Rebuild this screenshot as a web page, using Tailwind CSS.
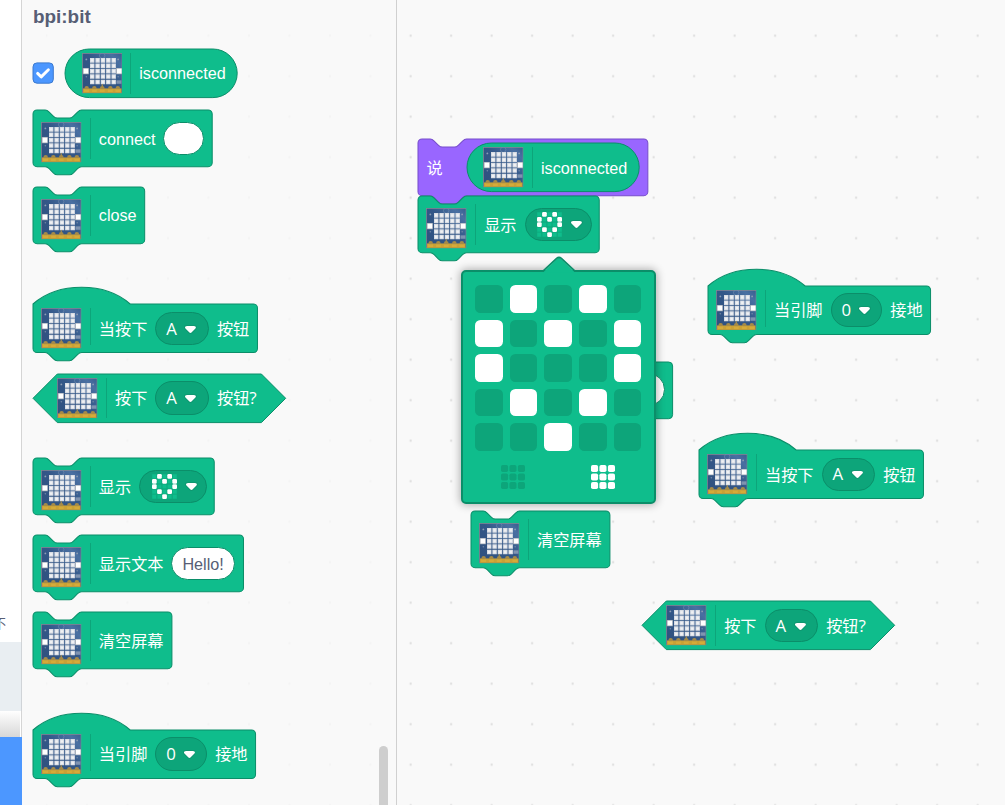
<!DOCTYPE html>
<html lang="zh-CN">
<head>
<meta charset="utf-8">
<title>bpi:bit</title>
<script src="https://cdn.jsdelivr.net/npm/@tailwindcss/browser@4"></script>
</head>
<body class="w-[1005px] h-[805px] overflow-hidden bg-[#f9f9f9] font-['Liberation_Sans','Noto_Sans_CJK_SC',sans-serif] text-[16.2px] leading-[20px] text-white">

<!-- shared symbols -->
<svg class="absolute w-0 h-0" aria-hidden="true">
  <defs>
    <linearGradient id="pcb" x1="0" y1="1" x2="1" y2="0"><stop offset="0" stop-color="#2f507e"/><stop offset=".55" stop-color="#335788"/><stop offset=".85" stop-color="#4a70a2"/><stop offset="1" stop-color="#3a5f90"/></linearGradient>
    <pattern id="dots" x="-9" y="15.5" width="40.5" height="40.5" patternUnits="userSpaceOnUse"><rect x="21.6" y="19.2" width="2" height="2" fill="#dcdcdc"/></pattern>
    <pattern id="dotsFaint" x="-16.5" y="15.5" width="40.5" height="40.5" patternUnits="userSpaceOnUse"><rect x="0" y="19.2" width="2" height="2" fill="#f3f3f3"/></pattern>
    <symbol id="board" viewBox="0 0 40 40">
      <rect width="40" height="40" fill="#7f8793"/>
      <rect x=".8" y=".8" width="38.4" height="38.4" fill="url(#pcb)"/>
      <circle cx="20" cy="2.6" r="2.7" fill="none" stroke="#6d89ad" stroke-width=".7"/>
      <g stroke="#d9dde4" stroke-width="4.5" stroke-dasharray="4.4 .9">
        <path d="M7.9 7.3h26.2"/><path d="M7.9 12.6h26.2"/><path d="M7.9 17.9h26.2"/><path d="M7.9 23.3h26.2"/><path d="M7.9 28.6h26.2"/>
      </g>
      <g stroke="#eff1f4" stroke-width="2.4" stroke-dasharray="2.4 2.9">
        <path d="M8.9 7.3h25"/><path d="M8.9 12.6h25"/><path d="M8.9 17.9h25"/><path d="M8.9 23.3h25"/><path d="M8.9 28.6h25"/>
      </g>
      <circle cx="4.3" cy="6.3" r=".9" fill="#8d9db3"/><circle cx="35.7" cy="6.3" r=".9" fill="#8d9db3"/>
      <circle cx="4.3" cy="23.4" r=".8" fill="#7388a5"/><circle cx="35.7" cy="23.4" r=".8" fill="#7388a5"/>
      <rect x=".8" y="14.8" width="6" height="6.2" fill="#9aa3b0"/><rect x="1.5" y="15.4" width="4.7" height="4.9" fill="#fff"/>
      <rect x="33.6" y="14.8" width="5.8" height="6.2" fill="#9aa3b0"/><rect x="34.4" y="15.4" width="4.7" height="4.9" fill="#fff"/>
      <rect x="34" y="27" width="5" height="3.4" fill="#7f93b0"/>
      <rect x="19.4" y="30.8" width="1.2" height="4" fill="#a98f4e"/>
      <rect x="1" y="35" width="38" height="4.4" fill="#c9a136"/>
      <g fill="#a68b47"><circle cx="4.6" cy="34.8" r="2.2"/><circle cx="12.2" cy="34.8" r="2.2"/><circle cx="20" cy="34.8" r="2.3"/><circle cx="28" cy="34.8" r="2.2"/><circle cx="35.4" cy="34.8" r="2.2"/></g>
      <g fill="#d5ab39"><rect x="2" y="35.8" width="5" height="2.8"/><rect x="10" y="35.8" width="4.6" height="2.8"/><rect x="17.6" y="35.8" width="4.8" height="2.8"/><rect x="25.6" y="35.8" width="4.8" height="2.8"/><rect x="33" y="35.8" width="5" height="2.8"/></g>
    </symbol>
    <symbol id="arrow" viewBox="0 0 12.71 8.79">
      <path fill="#231f20" opacity=".1" d="M12.71,2.44A2.41,2.41,0,0,1,12,4.16L8.08,8.08a2.45,2.45,0,0,1-3.45,0L0.72,4.16A2.42,2.42,0,0,1,0,2.44,2.48,2.48,0,0,1,.71.71C1,0.47,1.43,0,6.36,0S11.75,0.46,12,.71A2.44,2.44,0,0,1,12.71,2.44Z"/>
      <path fill="#fff" d="M6.36,7.79a1.43,1.43,0,0,1-1-.42L1.42,3.45a1.44,1.44,0,0,1,0-2c0.56-.56,9.31-0.56,9.87,0a1.44,1.44,0,0,1,0,2L7.37,7.37A1.43,1.43,0,0,1,6.36,7.79Z"/>
    </symbol>
    <symbol id="heart" viewBox="0 0 25 25">
      <g fill="#0fbd8c"><path d="M.2 .2h4.2v4.2H.2zM10.4 .2h4.2v4.2h-4.2zM20.6 .2h4.2v4.2h-4.2zM5.3 5.3h4.2v4.2H5.3zM15.5 5.3h4.2v4.2h-4.2zM5.3 10.4h4.2v4.2H5.3zM10.4 10.4h4.2v4.2h-4.2zM15.5 10.4h4.2v4.2h-4.2zM.2 15.5h4.2v4.2H.2zM10.4 15.5h4.2v4.2h-4.2zM20.6 15.5h4.2v4.2h-4.2zM.2 20.6h4.2v4.2H.2zM5.3 20.6h4.2v4.2H5.3zM15.5 20.6h4.2v4.2h-4.2zM20.6 20.6h4.2v4.2h-4.2z"/></g>
      <g fill="#fff"><rect x="5.1" y="0" width="4.7" height="4.7" rx="1.2"/><rect x="15.3" y="0" width="4.7" height="4.7" rx="1.2"/><rect x="0" y="5.1" width="4.7" height="4.7" rx="1.2"/><rect x="10.2" y="5.1" width="4.7" height="4.7" rx="1.2"/><rect x="20.3" y="5.1" width="4.7" height="4.7" rx="1.2"/><rect x="0" y="10.2" width="4.7" height="4.7" rx="1.2"/><rect x="20.3" y="10.2" width="4.7" height="4.7" rx="1.2"/><rect x="5.1" y="15.3" width="4.7" height="4.7" rx="1.2"/><rect x="15.3" y="15.3" width="4.7" height="4.7" rx="1.2"/><rect x="10.2" y="20.3" width="4.7" height="4.7" rx="1.2"/></g>
    </symbol>
    <symbol id="nine" viewBox="0 0 24 24">
      <rect width="7.1" height="7.1" rx="1.8"/><rect x="8.4" width="7.1" height="7.1" rx="1.8"/><rect x="16.9" width="7.1" height="7.1" rx="1.8"/>
      <rect y="8.4" width="7.1" height="7.1" rx="1.8"/><rect x="8.4" y="8.4" width="7.1" height="7.1" rx="1.8"/><rect x="16.9" y="8.4" width="7.1" height="7.1" rx="1.8"/>
      <rect y="16.9" width="7.1" height="7.1" rx="1.8"/><rect x="8.4" y="16.9" width="7.1" height="7.1" rx="1.8"/><rect x="16.9" y="16.9" width="7.1" height="7.1" rx="1.8"/>
    </symbol>
  </defs>
</svg>

<div class="flex w-full h-full">

  <!-- category strip -->
  <aside class="flex flex-col shrink-0 w-[22px] h-full overflow-hidden bg-white text-[#575e75]">
    <div class="h-[642px] flex items-end border-r border-[#d5d5d5]"><span class="-ml-[7px] mb-[9px] text-[13px] leading-[18px]">不</span></div>
    <div class="h-[69px] bg-[#e9eef2] border-r border-[#d0d4d8]"></div>
    <div class="h-[26px] border-r border-[#d5d5d5] pr-px"><div class="h-full bg-linear-to-b from-white to-[#d8d8d8]"></div></div>
    <div class="flex-1 bg-[#4c97ff]"></div>
  </aside>

  <!-- block palette -->
  <section class="relative shrink-0 w-[375px] h-full border-r border-[#d0d0d0]">
    <svg class="absolute inset-0 w-full h-full"><rect x="-16" y="20" width="374" height="785" fill="url(#dotsFaint)" transform="translate(40 0)"/></svg>
    <div class="absolute right-[8px] top-[746px] w-[9px] h-[80px] rounded-full bg-[#cecece]"></div>
    <div class="relative flex flex-col items-start pl-[11px]">
      <h2 class="mt-[6px] h-[23px] text-[18.9px] leading-[22px] font-bold text-[#575e75] whitespace-nowrap">bpi:bit</h2>

      <div class="flex items-center mt-[20.2px] -ml-[0.8px]">
        <svg class="w-[22px] h-[22px]" viewBox="0 0 22 22"><rect x="1" y=".9" width="20.3" height="20.3" rx="4" fill="#4c97ff" stroke="#3c7ad0"/><path d="M5.6 11.4l3.6 3.5 7.2-7.2" fill="none" stroke="#fff" stroke-width="2.9" stroke-linecap="round" stroke-linejoin="round"/></svg>
        <div class="relative ml-[11.2px] w-[172.2px] h-[48.6px]">
          <svg class="absolute inset-0 w-full h-full overflow-visible"><rect width="172.2" height="48.6" rx="24.3" fill="#0fbd8c" stroke="#0b8e69"/></svg>
          <div class="relative flex h-full items-center gap-[8.1px] pl-[16.2px] whitespace-nowrap">
            <svg class="w-[40.5px] h-[40.5px]"><use href="#board"/></svg><i class="w-px h-[40.5px] bg-[#0da57a]"></i><span>isconnected</span>
          </div>
        </div>
      </div>

      <div class="relative mt-[12.4px] w-[179.2px] h-[56.7px]">
        <svg class="absolute inset-0 w-full h-full overflow-visible"><path transform="scale(1.0125)" fill="#0fbd8c" stroke="#0b8e69" d="M0,4A4,4 0 0,1 4,0H12c2,0 3,1 4,2l4,4c1,1 2,2 4,2h12c2,0 3,-1 4,-2l4,-4c1,-1 2,-2 4,-2H173a4,4 0 0,1 4,4v48a4,4 0 0,1 -4,4H48c-2,0 -3,1 -4,2l-4,4c-1,1 -2,2 -4,2h-12c-2,0 -3,-1 -4,-2l-4,-4c-1,-1 -2,-2 -4,-2H4a4,4 0 0,1 -4,-4z"/></svg>
        <div class="relative flex h-full items-center gap-[8.1px] pl-[8.1px] whitespace-nowrap">
          <svg class="w-[40.5px] h-[40.5px] mt-[8px]"><use href="#board"/></svg><i class="w-px h-[40.5px] bg-[#0da57a]"></i><span>connect</span>
          <span class="w-[40.5px] h-[33px] -ml-[0.4px] rounded-full bg-white border border-[#0b8e69]"></span>
        </div>
      </div>

      <div class="relative mt-[20.2px] w-[112px] h-[56.7px]">
        <svg class="absolute inset-0 w-full h-full overflow-visible"><path transform="scale(1.0125)" fill="#0fbd8c" stroke="#0b8e69" d="M0,4A4,4 0 0,1 4,0H12c2,0 3,1 4,2l4,4c1,1 2,2 4,2h12c2,0 3,-1 4,-2l4,-4c1,-1 2,-2 4,-2H106.3a4,4 0 0,1 4,4v48a4,4 0 0,1 -4,4H48c-2,0 -3,1 -4,2l-4,4c-1,1 -2,2 -4,2h-12c-2,0 -3,-1 -4,-2l-4,-4c-1,-1 -2,-2 -4,-2H4a4,4 0 0,1 -4,-4z"/></svg>
        <div class="relative flex h-full items-center gap-[8.1px] pl-[8.1px] whitespace-nowrap">
          <svg class="w-[40.5px] h-[40.5px] mt-[8px]"><use href="#board"/></svg><i class="w-px h-[40.5px] bg-[#0da57a]"></i><span>close</span>
        </div>
      </div>

      <div class="relative mt-[60.7px] w-[224.4px] h-[48.6px]">
        <svg class="absolute inset-0 w-full h-full overflow-visible"><path transform="scale(1.0125)" fill="#0fbd8c" stroke="#0b8e69" d="M0,0c25,-22 71,-22 96,0H217.7a4,4 0 0,1 4,4v40a4,4 0 0,1 -4,4H48c-2,0 -3,1 -4,2l-4,4c-1,1 -2,2 -4,2h-12c-2,0 -3,-1 -4,-2l-4,-4c-1,-1 -2,-2 -4,-2H4a4,4 0 0,1 -4,-4z"/></svg>
        <div class="relative flex h-full items-center gap-[8.1px] pl-[8.1px] whitespace-nowrap">
          <svg class="w-[40.5px] h-[40.5px]"><use href="#board"/></svg><i class="w-px h-[37px] mb-[3.6px] bg-[#0da57a]"></i><span>当按下</span>
          <span class="flex items-center w-[53.8px] h-[33.4px] -mr-[0.4px] pl-[9.9px] rounded-full bg-[#0da57a] border border-[#0b8e69]"><b class="w-[18px] font-normal font-['Open_Sans'] text-[16.8px]">A</b><svg class="w-[12.9px] h-[8.9px] mt-px"><use href="#arrow"/></svg></span>
          <span>按钮</span>
        </div>
      </div>

      <div class="relative mt-[20.6px] w-[252.7px] h-[48.6px]">
        <svg class="absolute inset-0 w-full h-full overflow-visible"><path fill="#0fbd8c" stroke="#0b8e69" d="M24.3,0H228.4l24.3,24.3l-24.3,24.3H24.3L0,24.3z"/></svg>
        <div class="relative flex h-full items-center gap-[8.1px] pl-[24.3px] whitespace-nowrap">
          <svg class="w-[40.5px] h-[40.5px]"><use href="#board"/></svg><i class="w-px h-[40.5px] bg-[#0da57a]"></i><span>按下</span>
          <span class="flex items-center w-[53.8px] h-[33.4px] -mr-[0.4px] pl-[9.9px] rounded-full bg-[#0da57a] border border-[#0b8e69]"><b class="w-[18px] font-normal font-['Open_Sans'] text-[16.8px]">A</b><svg class="w-[12.9px] h-[8.9px] mt-px"><use href="#arrow"/></svg></span>
          <span>按钮<b class="font-normal font-['Open_Sans'] text-[17px]">?</b></span>
        </div>
      </div>

      <div class="relative mt-[36.2px] w-[181px] h-[56.7px]">
        <svg class="absolute inset-0 w-full h-full overflow-visible"><path transform="scale(1.0125)" fill="#0fbd8c" stroke="#0b8e69" d="M0,4A4,4 0 0,1 4,0H12c2,0 3,1 4,2l4,4c1,1 2,2 4,2h12c2,0 3,-1 4,-2l4,-4c1,-1 2,-2 4,-2H175a4,4 0 0,1 4,4v48a4,4 0 0,1 -4,4H48c-2,0 -3,1 -4,2l-4,4c-1,1 -2,2 -4,2h-12c-2,0 -3,-1 -4,-2l-4,-4c-1,-1 -2,-2 -4,-2H4a4,4 0 0,1 -4,-4z"/></svg>
        <div class="relative flex h-full items-center gap-[8.1px] pl-[8.1px] whitespace-nowrap">
          <svg class="w-[40.5px] h-[40.5px] mt-[8px]"><use href="#board"/></svg><i class="w-px h-[40.5px] bg-[#0da57a]"></i><span>显示</span>
          <span class="flex items-center w-[67.3px] h-[33px] pl-[11.8px] gap-[8px] rounded-full bg-[#0da57a] border border-[#0b8e69]"><svg class="w-[25px] h-[25px]"><use href="#heart"/></svg><svg class="w-[12.9px] h-[8.9px]"><use href="#arrow"/></svg></span>
        </div>
      </div>

      <div class="relative mt-[20.3px] w-[210.6px] h-[56.7px]">
        <svg class="absolute inset-0 w-full h-full overflow-visible"><path transform="scale(1.0125)" fill="#0fbd8c" stroke="#0b8e69" d="M0,4A4,4 0 0,1 4,0H12c2,0 3,1 4,2l4,4c1,1 2,2 4,2h12c2,0 3,-1 4,-2l4,-4c1,-1 2,-2 4,-2H203.9a4,4 0 0,1 4,4v48a4,4 0 0,1 -4,4H48c-2,0 -3,1 -4,2l-4,4c-1,1 -2,2 -4,2h-12c-2,0 -3,-1 -4,-2l-4,-4c-1,-1 -2,-2 -4,-2H4a4,4 0 0,1 -4,-4z"/></svg>
        <div class="relative flex h-full items-center gap-[8.1px] pl-[8.1px] whitespace-nowrap">
          <svg class="w-[40.5px] h-[40.5px] mt-[8px]"><use href="#board"/></svg><i class="w-px h-[40.5px] bg-[#0da57a]"></i><span class="pt-px">显示文本</span>
          <span class="flex items-center justify-center w-[63.6px] h-[33px] -ml-[0.3px] pt-px rounded-full bg-white text-[#575e75] border border-[#0b8e69]">Hello!</span>
        </div>
      </div>

      <div class="relative mt-[20.3px] w-[139px] h-[56.7px]">
        <svg class="absolute inset-0 w-full h-full overflow-visible"><path transform="scale(1.0125)" fill="#0fbd8c" stroke="#0b8e69" d="M0,4A4,4 0 0,1 4,0H12c2,0 3,1 4,2l4,4c1,1 2,2 4,2h12c2,0 3,-1 4,-2l4,-4c1,-1 2,-2 4,-2H133.2a4,4 0 0,1 4,4v48a4,4 0 0,1 -4,4H48c-2,0 -3,1 -4,2l-4,4c-1,1 -2,2 -4,2h-12c-2,0 -3,-1 -4,-2l-4,-4c-1,-1 -2,-2 -4,-2H4a4,4 0 0,1 -4,-4z"/></svg>
        <div class="relative flex h-full items-center gap-[8.1px] pl-[8.1px] whitespace-nowrap">
          <svg class="w-[40.5px] h-[40.5px] mt-[8px]"><use href="#board"/></svg><i class="w-px h-[40.5px] bg-[#0da57a]"></i><span class="pt-px">清空屏幕</span>
        </div>
      </div>

      <div class="relative mt-[60.5px] w-[222.5px] h-[48.6px]">
        <svg class="absolute inset-0 w-full h-full overflow-visible"><path transform="scale(1.0125)" fill="#0fbd8c" stroke="#0b8e69" d="M0,0c25,-22 71,-22 96,0H215.8a4,4 0 0,1 4,4v40a4,4 0 0,1 -4,4H48c-2,0 -3,1 -4,2l-4,4c-1,1 -2,2 -4,2h-12c-2,0 -3,-1 -4,-2l-4,-4c-1,-1 -2,-2 -4,-2H4a4,4 0 0,1 -4,-4z"/></svg>
        <div class="relative flex h-full items-center gap-[8.1px] pl-[8.1px] whitespace-nowrap">
          <svg class="w-[40.5px] h-[40.5px]"><use href="#board"/></svg><i class="w-px h-[37px] mb-[3.6px] bg-[#0da57a]"></i><span class="pt-px">当引脚</span>
          <span class="flex items-center w-[51.8px] h-[33.4px] -mr-[0.2px] pl-[9.9px] rounded-full bg-[#0da57a] border border-[#0b8e69]"><b class="w-[16.2px] font-normal font-['Open_Sans'] text-[16.8px]">0</b><svg class="w-[12.9px] h-[8.9px] mt-px"><use href="#arrow"/></svg></span>
          <span class="pt-px">接地</span>
        </div>
      </div>
    </div>
  </section>

  <!-- workspace canvas -->
  <main class="relative flex-1 h-full overflow-hidden">
    <svg class="absolute inset-0 w-full h-full"><rect width="100%" height="100%" fill="url(#dots)"/></svg>

    <div class="absolute left-[21.4px] top-[196.2px] w-[181.4px] h-[56.7px] z-10">
      <svg class="absolute inset-0 w-full h-full overflow-visible"><path transform="scale(1.0125)" fill="#0fbd8c" stroke="#0b8e69" d="M0,4A4,4 0 0,1 4,0H12c2,0 3,1 4,2l4,4c1,1 2,2 4,2h12c2,0 3,-1 4,-2l4,-4c1,-1 2,-2 4,-2H175a4,4 0 0,1 4,4v48a4,4 0 0,1 -4,4H48c-2,0 -3,1 -4,2l-4,4c-1,1 -2,2 -4,2h-12c-2,0 -3,-1 -4,-2l-4,-4c-1,-1 -2,-2 -4,-2H4a4,4 0 0,1 -4,-4z"/></svg>
      <div class="relative flex h-full items-center gap-[8.1px] pl-[8.1px] whitespace-nowrap">
        <svg class="w-[40.5px] h-[40.5px] mt-[8px]"><use href="#board"/></svg><i class="w-px h-[40.5px] bg-[#0da57a]"></i><span>显示</span>
        <span class="flex items-center w-[67.3px] h-[33px] pl-[11.8px] gap-[8px] rounded-full bg-[#0da57a] border border-[#0b8e69]"><svg class="w-[25px] h-[25px]"><use href="#heart"/></svg><svg class="w-[12.9px] h-[8.9px]"><use href="#arrow"/></svg></span>
      </div>
    </div>

    <div class="absolute left-[21.4px] top-[139.4px] w-[229.8px] h-[56.7px]">
      <svg class="absolute inset-0 w-full h-full overflow-visible"><path transform="scale(1.0125)" fill="#9966ff" stroke="#774dcb" d="M0,4A4,4 0 0,1 4,0H12c2,0 3,1 4,2l4,4c1,1 2,2 4,2h12c2,0 3,-1 4,-2l4,-4c1,-1 2,-2 4,-2H223a4,4 0 0,1 4,4v48a4,4 0 0,1 -4,4H48c-2,0 -3,1 -4,2l-4,4c-1,1 -2,2 -4,2h-12c-2,0 -3,-1 -4,-2l-4,-4c-1,-1 -2,-2 -4,-2H4a4,4 0 0,1 -4,-4z"/></svg>
      <div class="relative flex h-full items-center pl-[8.1px] whitespace-nowrap">
        <span class="w-[40.6px] pt-px">说</span>
        <div class="relative w-[172.2px] h-[48.6px]">
          <svg class="absolute inset-0 w-full h-full overflow-visible"><rect width="172.2" height="48.6" rx="24.3" fill="#0fbd8c" stroke="#0b8e69"/></svg>
          <div class="relative flex h-full items-center gap-[8.1px] pl-[16.2px]">
            <svg class="w-[40.5px] h-[40.5px]"><use href="#board"/></svg><i class="w-px h-[40.5px] bg-[#0da57a]"></i><span>isconnected</span>
          </div>
        </div>
      </div>
    </div>

    <!-- text block, mostly under the matrix editor -->
    <div class="absolute left-[65px] top-[361.6px] w-[210.6px] h-[56.7px]">
      <svg class="absolute inset-0 w-full h-full overflow-visible"><rect width="210.6" height="56.7" rx="4" fill="#0fbd8c" stroke="#0b8e69"/></svg>
      <div class="relative flex h-full items-center justify-end pr-[7.6px]"><span class="w-[63px] h-[33px] rounded-full bg-white border border-[#0b8e69]"></span></div>
    </div>

    <div class="absolute left-[74.2px] top-[511.2px] w-[139px] h-[56.7px]">
      <svg class="absolute inset-0 w-full h-full overflow-visible"><path transform="scale(1.0125)" fill="#0fbd8c" stroke="#0b8e69" d="M0,4A4,4 0 0,1 4,0H12c2,0 3,1 4,2l4,4c1,1 2,2 4,2h12c2,0 3,-1 4,-2l4,-4c1,-1 2,-2 4,-2H133.2a4,4 0 0,1 4,4v48a4,4 0 0,1 -4,4H48c-2,0 -3,1 -4,2l-4,4c-1,1 -2,2 -4,2h-12c-2,0 -3,-1 -4,-2l-4,-4c-1,-1 -2,-2 -4,-2H4a4,4 0 0,1 -4,-4z"/></svg>
      <div class="relative flex h-full items-center gap-[8.1px] pl-[8.1px] whitespace-nowrap">
        <svg class="w-[40.5px] h-[40.5px] mt-[8px]"><use href="#board"/></svg><i class="w-px h-[40.5px] bg-[#0da57a]"></i><span>清空屏幕</span>
      </div>
    </div>

    <div class="absolute left-[311.2px] top-[285.8px] w-[222.5px] h-[48.6px]">
      <svg class="absolute inset-0 w-full h-full overflow-visible"><path transform="scale(1.0125)" fill="#0fbd8c" stroke="#0b8e69" d="M0,0c25,-22 71,-22 96,0H215.8a4,4 0 0,1 4,4v40a4,4 0 0,1 -4,4H48c-2,0 -3,1 -4,2l-4,4c-1,1 -2,2 -4,2h-12c-2,0 -3,-1 -4,-2l-4,-4c-1,-1 -2,-2 -4,-2H4a4,4 0 0,1 -4,-4z"/></svg>
      <div class="relative flex h-full items-center gap-[8.1px] pl-[8.1px] whitespace-nowrap">
        <svg class="w-[40.5px] h-[40.5px]"><use href="#board"/></svg><i class="w-px h-[37px] mb-[3.6px] bg-[#0da57a]"></i><span>当引脚</span>
        <span class="flex items-center w-[51.8px] h-[33.4px] -mr-[0.2px] pl-[9.9px] rounded-full bg-[#0da57a] border border-[#0b8e69]"><b class="w-[16.2px] font-normal font-['Open_Sans'] text-[16.8px]">0</b><svg class="w-[12.9px] h-[8.9px] mt-px"><use href="#arrow"/></svg></span>
        <span>接地</span>
      </div>
    </div>

    <div class="absolute left-[302.2px] top-[450.1px] w-[224.4px] h-[48.6px]">
      <svg class="absolute inset-0 w-full h-full overflow-visible"><path transform="scale(1.0125)" fill="#0fbd8c" stroke="#0b8e69" d="M0,0c25,-22 71,-22 96,0H217.7a4,4 0 0,1 4,4v40a4,4 0 0,1 -4,4H48c-2,0 -3,1 -4,2l-4,4c-1,1 -2,2 -4,2h-12c-2,0 -3,-1 -4,-2l-4,-4c-1,-1 -2,-2 -4,-2H4a4,4 0 0,1 -4,-4z"/></svg>
      <div class="relative flex h-full items-center gap-[8.1px] pl-[8.1px] whitespace-nowrap">
        <svg class="w-[40.5px] h-[40.5px]"><use href="#board"/></svg><i class="w-px h-[37px] mb-[3.6px] bg-[#0da57a]"></i><span class="pt-px">当按下</span>
        <span class="flex items-center w-[53.8px] h-[33.4px] -mr-[0.4px] pl-[9.9px] rounded-full bg-[#0da57a] border border-[#0b8e69]"><b class="w-[18px] font-normal font-['Open_Sans'] text-[16.8px]">A</b><svg class="w-[12.9px] h-[8.9px] mt-px"><use href="#arrow"/></svg></span>
        <span class="pt-px">按钮</span>
      </div>
    </div>

    <div class="absolute left-[245.2px] top-[601.3px] w-[252.7px] h-[48.6px]">
      <svg class="absolute inset-0 w-full h-full overflow-visible"><path fill="#0fbd8c" stroke="#0b8e69" d="M24.3,0H228.4l24.3,24.3l-24.3,24.3H24.3L0,24.3z"/></svg>
      <div class="relative flex h-full items-center gap-[8.1px] pl-[24.3px] whitespace-nowrap">
        <svg class="w-[40.5px] h-[40.5px]"><use href="#board"/></svg><i class="w-px h-[40.5px] bg-[#0da57a]"></i><span class="pt-px">按下</span>
        <span class="flex items-center w-[53.8px] h-[33.4px] -mr-[0.4px] pl-[9.9px] rounded-full bg-[#0da57a] border border-[#0b8e69]"><b class="w-[18px] font-normal font-['Open_Sans'] text-[16.8px]">A</b><svg class="w-[12.9px] h-[8.9px] mt-px"><use href="#arrow"/></svg></span>
        <span class="pt-px">按钮<b class="font-normal font-['Open_Sans'] text-[17px]">?</b></span>
      </div>
    </div>

    <!-- matrix editor popup -->
    <div class="absolute z-20 left-[64px] top-[270px] w-[195px] h-[234px] rounded-[5px] border-2 border-[#0b8e69] bg-[#0fbd8c] shadow-[0_0_8px_1px_rgba(0,0,0,0.3)]">
      <svg class="absolute left-[80px] -top-[15px] w-[32px] h-[16px] overflow-visible" viewBox="0 0 32 16"><path d="M0 15.5L13.6 1.9Q16 -.3 18.4 1.9L32 15.5z" fill="#0fbd8c"/><path d="M0 14.2L13.6 1.4Q16 -.6 18.4 1.4L32 14.2" fill="none" stroke="#0b8e69" stroke-width="1.6"/></svg>
      <div class="grid grid-cols-5 gap-[7.05px] ml-[12.2px] mt-[13.3px] w-[166px]">
        <i class="h-[27.5px] rounded-[5.5px] bg-[#0da57a]"></i><i class="h-[27.5px] rounded-[5.5px] bg-white"></i><i class="h-[27.5px] rounded-[5.5px] bg-[#0da57a]"></i><i class="h-[27.5px] rounded-[5.5px] bg-white"></i><i class="h-[27.5px] rounded-[5.5px] bg-[#0da57a]"></i>
        <i class="h-[27.5px] rounded-[5.5px] bg-white"></i><i class="h-[27.5px] rounded-[5.5px] bg-[#0da57a]"></i><i class="h-[27.5px] rounded-[5.5px] bg-white"></i><i class="h-[27.5px] rounded-[5.5px] bg-[#0da57a]"></i><i class="h-[27.5px] rounded-[5.5px] bg-white"></i>
        <i class="h-[27.5px] rounded-[5.5px] bg-white"></i><i class="h-[27.5px] rounded-[5.5px] bg-[#0da57a]"></i><i class="h-[27.5px] rounded-[5.5px] bg-[#0da57a]"></i><i class="h-[27.5px] rounded-[5.5px] bg-[#0da57a]"></i><i class="h-[27.5px] rounded-[5.5px] bg-white"></i>
        <i class="h-[27.5px] rounded-[5.5px] bg-[#0da57a]"></i><i class="h-[27.5px] rounded-[5.5px] bg-white"></i><i class="h-[27.5px] rounded-[5.5px] bg-[#0da57a]"></i><i class="h-[27.5px] rounded-[5.5px] bg-white"></i><i class="h-[27.5px] rounded-[5.5px] bg-[#0da57a]"></i>
        <i class="h-[27.5px] rounded-[5.5px] bg-[#0da57a]"></i><i class="h-[27.5px] rounded-[5.5px] bg-[#0da57a]"></i><i class="h-[27.5px] rounded-[5.5px] bg-white"></i><i class="h-[27.5px] rounded-[5.5px] bg-[#0da57a]"></i><i class="h-[27.5px] rounded-[5.5px] bg-[#0da57a]"></i>
      </div>
      <div class="flex gap-[66px] mt-[14.3px] ml-[38.2px]">
        <svg class="w-[24px] h-[24px] fill-[#0da57a]"><use href="#nine"/></svg>
        <svg class="w-[24px] h-[24px] fill-white"><use href="#nine"/></svg>
      </div>
    </div>
  </main>
</div>
</body>
</html>
